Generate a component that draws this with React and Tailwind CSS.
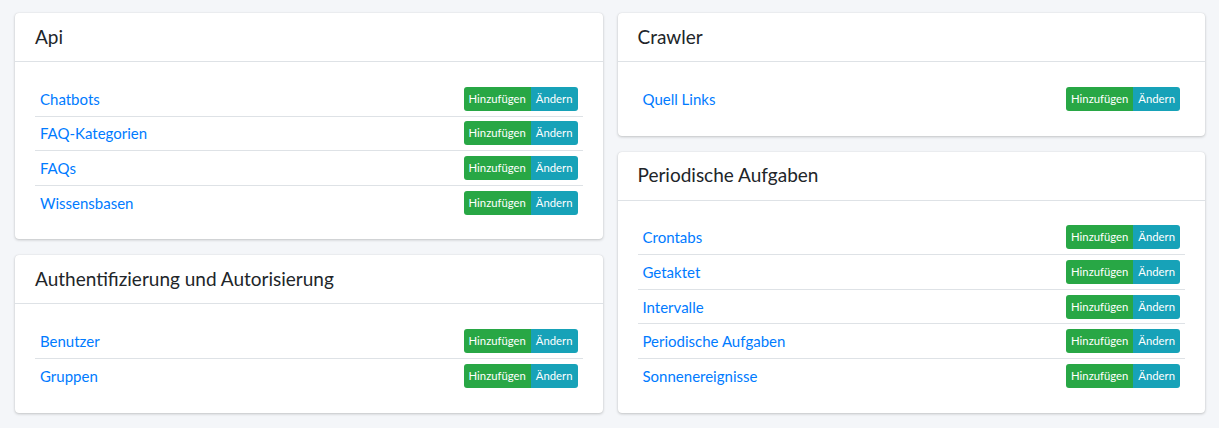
import React from "react";

const font = { fontFamily: "Lato, 'Noto Sans', sans-serif" };

function Row({ label, first }) {
  return (
    <div
      className={
        "flex items-center justify-between px-[5px] py-[4.8px] " +
        (first ? "" : "border-t border-[#dee2e6]")
      }
    >
      <a className="text-[15px] leading-6 text-[#007bff]">{label}</a>
      <div className="flex h-6 text-[11.3px] leading-6 text-white">
        <span className="rounded-l-[3px] bg-[#28a745] px-[5px]">Hinzufügen</span>
        <span className="rounded-r-[3px] bg-[#17a2b8] px-[5px]">Ändern</span>
      </div>
    </div>
  );
}

function Card({ title, items }) {
  return (
    <div className="rounded-[4px] bg-white shadow-[0_0_1px_rgba(0,0,0,0.125),0_1px_3px_rgba(0,0,0,0.2)]">
      <div className="flex h-[49px] items-center border-b border-[#dee2e6] px-5">
        <h3 className="text-[19px] font-normal text-[#212529]">{title}</h3>
      </div>
      <div className="p-5">
        {items.map((it, i) => (
          <Row key={it} label={it} first={i === 0} />
        ))}
      </div>
    </div>
  );
}

export default function App() {
  return (
    <div className="min-h-[428px] bg-[#f4f6f9] pl-[15px] pr-[14px] pt-[13px]" style={font}>
      <div className="grid grid-cols-2 gap-[15px]">
        <div className="flex flex-col gap-4">
          <Card title="Api" items={["Chatbots", "FAQ-Kategorien", "FAQs", "Wissensbasen"]} />
          <Card title="Authentifizierung und Autorisierung" items={["Benutzer", "Gruppen"]} />
        </div>
        <div className="flex flex-col gap-4">
          <Card title="Crawler" items={["Quell Links"]} />
          <Card
            title="Periodische Aufgaben"
            items={["Crontabs", "Getaktet", "Intervalle", "Periodische Aufgaben", "Sonnenereignisse"]}
          />
        </div>
      </div>
    </div>
  );
}
